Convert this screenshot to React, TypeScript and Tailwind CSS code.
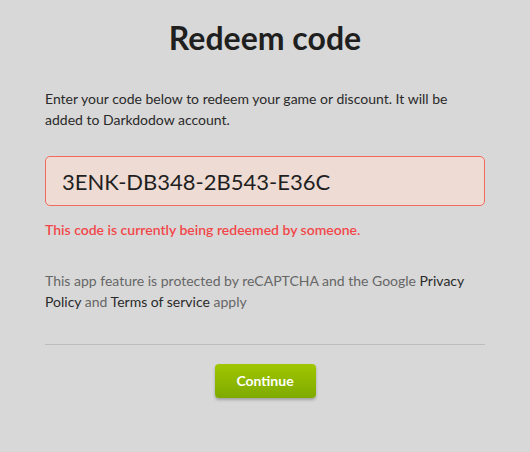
import React from "react";

export default function App() {
  return (
    <div
      className="min-h-[452px] w-[530px] bg-[#d8d8d8] text-[#222]"
      style={{ fontFamily: "Lato, 'Noto Sans', sans-serif" }}
    >
      <div className="mx-auto w-[440px] pt-[18px]">
        <h1 className="text-center text-[32px] font-bold leading-[40px] text-[#1f1f1f]">
          Redeem code
        </h1>
        <p className="mt-[30px] text-[14px] leading-[21px] text-[#2a2a2a]">
          Enter your code below to redeem your game or discount. It will be
          added to Darkdodow account.
        </p>
        <div className="mt-[26px] flex h-[50px] items-center rounded-[5px] border border-[#f26a5e] bg-[#eedcd4] px-[16px]">
          <span className="text-[22px] text-[#1f1f1f]">3ENK-DB348-2B543-E36C</span>
        </div>
        <p className="mt-[14px] text-[14px] font-semibold leading-[20px] text-[#f2474a]">
          This code is currently being redeemed by someone.
        </p>
        <p className="mt-[30px] text-[14px] leading-[21px] text-[#666]">
          This app feature is protected by reCAPTCHA and the Google{" "}
          <a className="text-[#2a2a2a]">Privacy Policy</a> and{" "}
          <a className="text-[#2a2a2a]">Terms of service</a> apply
        </p>
        <div className="mt-[32px] border-t border-[#bdbdbd]" />
        <div className="mt-[19px] flex justify-center">
          <button className="h-[34px] w-[101px] rounded-[4px] bg-gradient-to-b from-[#a0c700] to-[#7eaa00] pb-[2px] text-[14px] font-bold text-white shadow-[0_2px_3px_rgba(0,0,0,0.25)]">
            Continue
          </button>
        </div>
      </div>
    </div>
  );
}
